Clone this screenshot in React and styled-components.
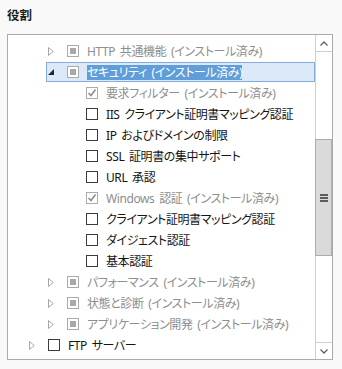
import React from "react";
import styled, { createGlobalStyle } from "styled-components";

const GlobalStyle = createGlobalStyle`
  body {
    margin: 0;
    background: #f9f9f9;
    font-family: "Noto Sans", "Noto Sans CJK JP", sans-serif;
  }
`;

const rows = [
  { level: 1, label: "HTTP 共通機能 (インストール済み)", expander: "closed", box: "mixed", muted: true },
  { level: 1, label: "セキュリティ (インストール済み)", expander: "open", box: "mixed", selected: true },
  { level: 2, label: "要求フィルター (インストール済み)", box: "checked", muted: true },
  { level: 2, label: "IIS クライアント証明書マッピング認証", box: "empty" },
  { level: 2, label: "IP およびドメインの制限", box: "empty" },
  { level: 2, label: "SSL 証明書の集中サポート", box: "empty" },
  { level: 2, label: "URL 承認", box: "empty" },
  { level: 2, label: "Windows 認証 (インストール済み)", box: "checked", muted: true },
  { level: 2, label: "クライアント証明書マッピング認証", box: "empty" },
  { level: 2, label: "ダイジェスト認証", box: "empty" },
  { level: 2, label: "基本認証", box: "empty" },
  { level: 1, label: "パフォーマンス (インストール済み)", expander: "closed", box: "mixed", muted: true },
  { level: 1, label: "状態と診断 (インストール済み)", expander: "closed", box: "mixed", muted: true },
  { level: 1, label: "アプリケーション開発 (インストール済み)", expander: "closed", box: "mixed", muted: true },
  { level: 0, label: "FTP サーバー", expander: "closed", box: "empty" },
];

function Expander({ state }) {
  if (state === "open") {
    return (
      <svg width="6" height="6" viewBox="0 0 6 6">
        <polygon points="6,0 6,6 0,6" fill="#262626" />
      </svg>
    );
  }
  if (state === "closed") {
    return (
      <svg width="6" height="9" viewBox="0 0 6 9">
        <polygon points="0.5,0.5 5.2,4.5 0.5,8.5" fill="none" stroke="#a6a6a6" />
      </svg>
    );
  }
  return null;
}

function Check({ state }) {
  return (
    <Box $state={state}>
      {state === "mixed" && <Fill />}
      {state === "checked" && (
        <svg width="10" height="10" viewBox="0 0 10 10">
          <polyline points="1.5,5 4,7.5 8.5,1.5" fill="none" stroke="#8c8c8c" strokeWidth="1.5" />
        </svg>
      )}
    </Box>
  );
}

function App() {
  return (
    <Page>
      <GlobalStyle />
      <Title>役割</Title>
      <Panel>
        <List>
          {rows.map((r) => (
            <Row key={r.label} $level={r.level}>
              <Item $selected={r.selected}>
                <Slot>
                  <Expander state={r.expander} />
                </Slot>
                <Check state={r.box} />
                <Label $muted={r.muted} $selected={r.selected}>
                  {r.label}
                </Label>
              </Item>
            </Row>
          ))}
        </List>
        <Scrollbar>
          <ArrowButton>
            <svg width="8" height="5" viewBox="0 0 8 5">
              <polyline points="0.5,4.5 4,1 7.5,4.5" fill="none" stroke="#606060" strokeWidth="1.3" />
            </svg>
          </ArrowButton>
          <Track>
            <Thumb>
              <Grip />
              <Grip />
              <Grip />
            </Thumb>
          </Track>
          <ArrowButton $bottom>
            <svg width="8" height="5" viewBox="0 0 8 5">
              <polyline points="0.5,0.5 4,4 7.5,0.5" fill="none" stroke="#606060" strokeWidth="1.3" />
            </svg>
          </ArrowButton>
        </Scrollbar>
      </Panel>
    </Page>
  );
}

export default App;

const Page = styled.div`
  padding: 6px 0 0 7px;
`;

const Title = styled.div`
  font-family: "Noto Sans CJK JP", sans-serif;
  font-size: 12.5px;
  font-weight: bold;
  color: #1e1e1e;
  height: 18px;
  line-height: 18px;
  margin-bottom: 10px;
`;

const Panel = styled.div`
  display: flex;
  width: 324px;
  height: 324px;
  border: 1px solid #ababab;
  background: #fff;
`;

const List = styled.div`
  flex: 1;
  padding-top: 6px;
  overflow: hidden;
`;

const Row = styled.div`
  display: flex;
  height: 21px;
  padding-left: ${(p) => 19 + p.$level * 19}px;
`;

const Item = styled.div`
  flex: 1;
  display: flex;
  align-items: center;
  height: 20px;
  box-sizing: border-box;
  border: 1px solid ${(p) => (p.$selected ? "#84acdd" : "transparent")};
  background: ${(p) => (p.$selected ? "#dce9f8" : "transparent")};
`;

const Slot = styled.div`
  width: 19px;
  padding-left: 1px;
  display: flex;
  align-items: center;
`;

const Box = styled.div`
  width: 12px;
  height: 12px;
  box-sizing: border-box;
  border: 1px solid ${(p) => (p.$state === "empty" ? "#3c3c3c" : "#ababab")};
  background: #fff;
  display: flex;
  align-items: center;
  justify-content: center;
  flex-shrink: 0;
`;

const Fill = styled.div`
  width: 6px;
  height: 6px;
  background: #a9a9a9;
`;

const Label = styled.span`
  margin-left: 8px;
  font-size: 12px;
  line-height: 15px;
  white-space: nowrap;
  font-feature-settings: "palt";
  letter-spacing: -0.4px;
  word-spacing: 2px;
  color: ${(p) => (p.$selected ? "#fff" : p.$muted ? "#8e8e8e" : "#141414")};
  background: ${(p) => (p.$selected ? "#5f9ed8" : "transparent")};
`;

const Scrollbar = styled.div`
  width: 16px;
  border-left: 1px solid #cfcfcf;
  display: flex;
  flex-direction: column;
`;

const ArrowButton = styled.div`
  height: 16px;
  display: flex;
  align-items: center;
  justify-content: center;
  border-bottom: ${(p) => (p.$bottom ? "none" : "1px solid #cfcfcf")};
  border-top: ${(p) => (p.$bottom ? "1px solid #cfcfcf" : "none")};
`;

const Track = styled.div`
  flex: 1;
  padding-top: 87px;
`;

const Thumb = styled.div`
  height: 117px;
  margin-left: -1px;
  box-sizing: border-box;
  border: 1px solid #acacac;
  background: #dadada;
  display: flex;
  flex-direction: column;
  align-items: center;
  justify-content: center;
  gap: 1px;
`;

const Grip = styled.div`
  width: 8px;
  height: 2px;
  background: #5c5c5c;
`;
